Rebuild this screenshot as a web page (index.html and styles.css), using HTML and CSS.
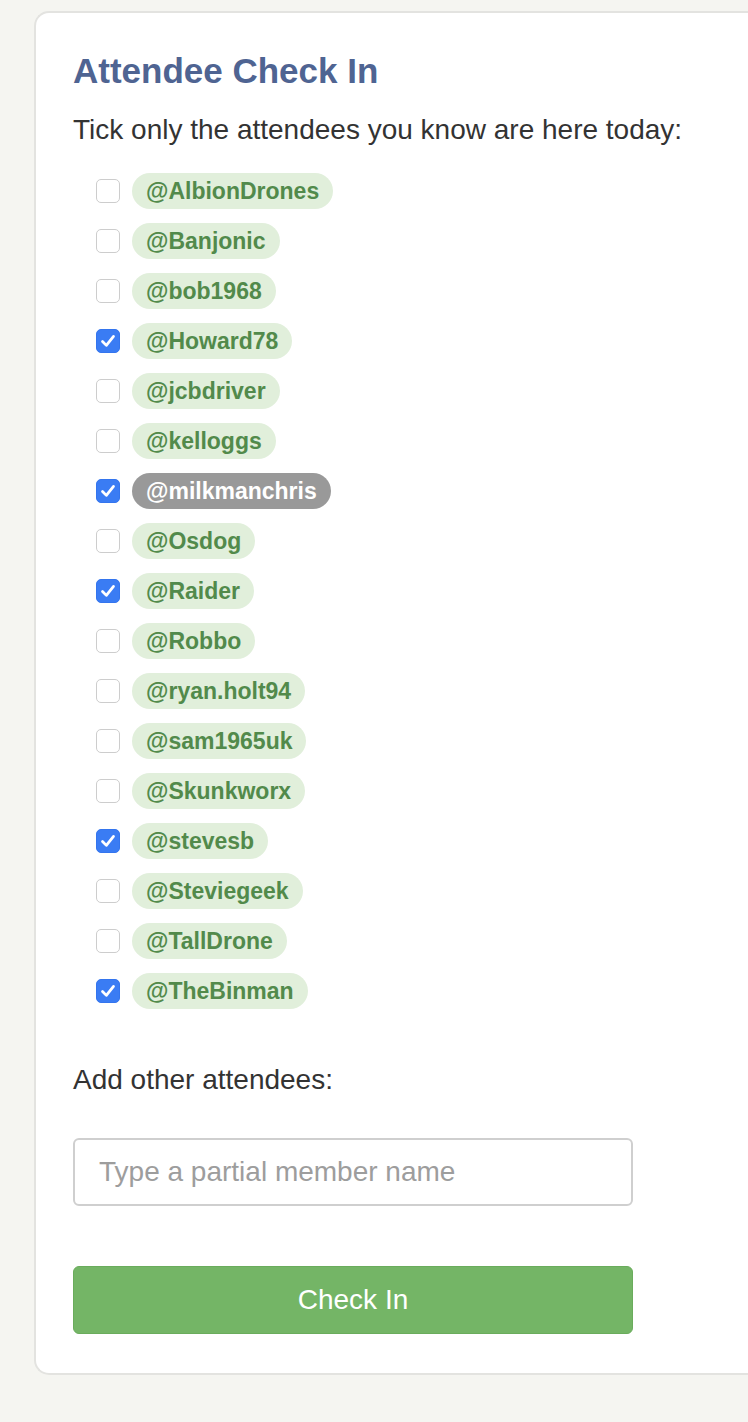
FILE: index.html
```html
<!DOCTYPE html>
<html lang="en">
<head>
<meta charset="utf-8">
<title>Attendee Check In</title>
<link rel="stylesheet" href="styles.css">
</head>
<body>
<div class="card">
  <h1 class="title">Attendee Check In</h1>
  <p class="lead">Tick only the attendees you know are here today:</p>
  <ul class="list">
    <li class="row"><span class="box"></span><span class="pill">@AlbionDrones</span></li>
    <li class="row"><span class="box"></span><span class="pill">@Banjonic</span></li>
    <li class="row"><span class="box"></span><span class="pill">@bob1968</span></li>
    <li class="row"><span class="box checked"><svg viewBox="0 0 24 24" class="tick"><path d="M6 12.5 L10.2 16.8 L18 7"/></svg></span><span class="pill">@Howard78</span></li>
    <li class="row"><span class="box"></span><span class="pill">@jcbdriver</span></li>
    <li class="row"><span class="box"></span><span class="pill">@kelloggs</span></li>
    <li class="row"><span class="box checked"><svg viewBox="0 0 24 24" class="tick"><path d="M6 12.5 L10.2 16.8 L18 7"/></svg></span><span class="pill pill-self">@milkmanchris</span></li>
    <li class="row"><span class="box"></span><span class="pill">@Osdog</span></li>
    <li class="row"><span class="box checked"><svg viewBox="0 0 24 24" class="tick"><path d="M6 12.5 L10.2 16.8 L18 7"/></svg></span><span class="pill">@Raider</span></li>
    <li class="row"><span class="box"></span><span class="pill">@Robbo</span></li>
    <li class="row"><span class="box"></span><span class="pill">@ryan.holt94</span></li>
    <li class="row"><span class="box"></span><span class="pill">@sam1965uk</span></li>
    <li class="row"><span class="box"></span><span class="pill">@Skunkworx</span></li>
    <li class="row"><span class="box checked"><svg viewBox="0 0 24 24" class="tick"><path d="M6 12.5 L10.2 16.8 L18 7"/></svg></span><span class="pill">@stevesb</span></li>
    <li class="row"><span class="box"></span><span class="pill">@Steviegeek</span></li>
    <li class="row"><span class="box"></span><span class="pill">@TallDrone</span></li>
    <li class="row"><span class="box checked"><svg viewBox="0 0 24 24" class="tick"><path d="M6 12.5 L10.2 16.8 L18 7"/></svg></span><span class="pill">@TheBinman</span></li>
  </ul>
  <p class="label">Add other attendees:</p>
  <input class="field" type="text" placeholder="Type a partial member name">
  <button class="btn" type="button">Check In</button>
</div>
</body>
</html>
```
FILE: styles.css
```css
html, body {
  margin: 0;
  padding: 0;
  background: #f5f5f1;
}
body {
  font-family: "Liberation Sans", Arial, Helvetica, sans-serif;
  color: #333;
  padding: 11px 0 0 34px;
  overflow: hidden;
}
.card {
  width: 716px;
  box-sizing: border-box;
  background: #fff;
  border: 2px solid #e3e3e0;
  border-right: none;
  border-radius: 15px 0 0 15px;
  padding: 29px 0 39px 37px;
}
.title {
  margin: 0;
  font-size: 35px;
  line-height: 58px;
  font-weight: bold;
  color: #4f6492;
}
.lead {
  margin: 0;
  font-size: 28px;
  line-height: 34px;
  height: 34px;
  margin-top: 13px;
}
.list {
  list-style: none;
  margin: 26px 0 0 0;
  padding: 0 0 0 23px;
}
.row {
  display: flex;
  align-items: center;
  height: 36px;
  margin-bottom: 14px;
}
.box {
  width: 22px;
  height: 22px;
  border: 1px solid #cdcdcd;
  border-radius: 5px;
  background: #fff;
  box-sizing: content-box;
  margin-right: 12px;
  display: flex;
  align-items: center;
  justify-content: center;
}
.box.checked {
  background: #3a7cf4;
  border-color: #3475ee;
}
.tick {
  width: 22px;
  height: 22px;
  fill: none;
  stroke: #fff;
  stroke-width: 3;
  stroke-linecap: round;
  stroke-linejoin: round;
}
.pill {
  display: inline-flex;
  align-items: center;
  height: 36px;
  padding: 0 14px;
  border-radius: 18px;
  background: #e1efdb;
  color: #528a4b;
  font-weight: bold;
  font-size: 23px;
}
.pill-self {
  background: #999;
  color: #fff;
}
.label {
  margin: 54px 0 0 0;
  font-size: 28px;
  line-height: 34px;
}
.field {
  display: block;
  margin-top: 41px;
  width: 560px;
  height: 68px;
  box-sizing: border-box;
  border: 2px solid #cfcfcf;
  border-radius: 6px;
  padding: 0 0 0 24px;
  font-family: "Liberation Sans", Arial, Helvetica, sans-serif;
  font-size: 28px;
  color: #333;
  background: #fff;
  outline: none;
}
.field::placeholder {
  color: #9d9d9d;
}
.btn {
  display: block;
  margin-top: 60px;
  width: 560px;
  height: 68px;
  border: 1px solid #6aac5c;
  border-radius: 6px;
  background: #74b566;
  color: #fff;
  font-family: "Liberation Sans", Arial, Helvetica, sans-serif;
  font-size: 28px;
  cursor: pointer;
}
```
